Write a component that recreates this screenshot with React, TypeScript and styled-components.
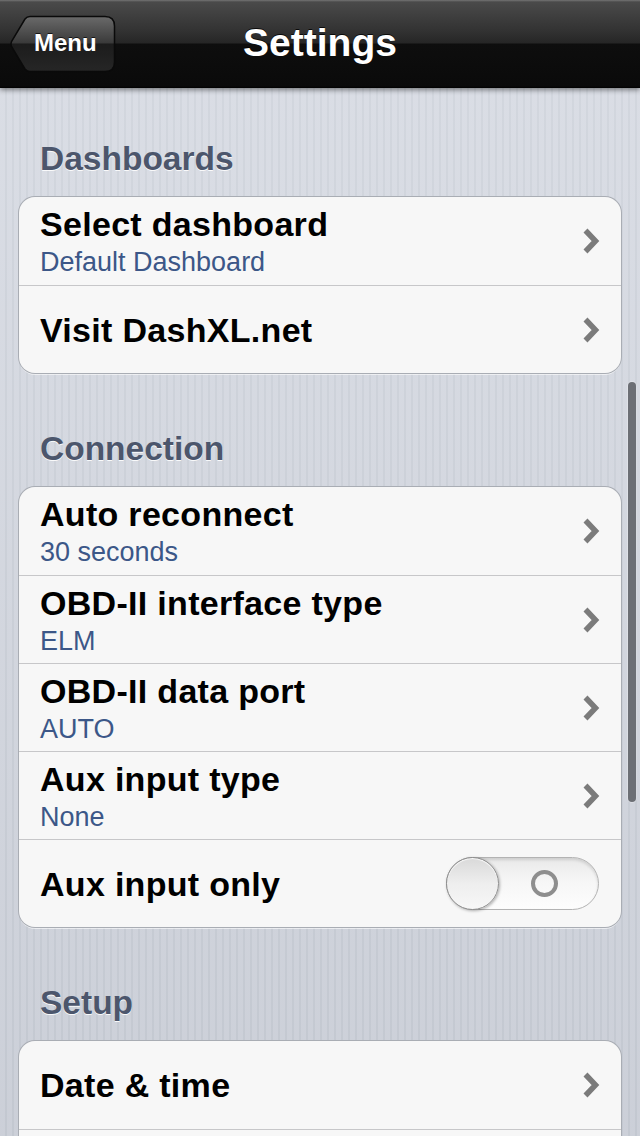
import { useState } from "react";
import styled, { createGlobalStyle } from "styled-components";

type RowKind = "link" | "switch";

interface SettingRow {
  label: string;
  value?: string;
  kind: RowKind;
}

interface SettingSection {
  title: string;
  rows: SettingRow[];
}

const sections: SettingSection[] = [
  {
    title: "Dashboards",
    rows: [
      { label: "Select dashboard", value: "Default Dashboard", kind: "link" },
      { label: "Visit DashXL.net", kind: "link" },
    ],
  },
  {
    title: "Connection",
    rows: [
      { label: "Auto reconnect", value: "30 seconds", kind: "link" },
      { label: "OBD-II interface type", value: "ELM", kind: "link" },
      { label: "OBD-II data port", value: "AUTO", kind: "link" },
      { label: "Aux input type", value: "None", kind: "link" },
      { label: "Aux input only", kind: "switch" },
    ],
  },
  {
    title: "Setup",
    rows: [
      { label: "Date & time", kind: "link" },
      { label: "", kind: "link" },
    ],
  },
];

function BackShape() {
  return (
    <ButtonShape width="107" height="59" viewBox="0 0 107 59">
      <defs>
        <linearGradient id="backFill" x1="0" y1="0" x2="0" y2="1">
          <stop offset="0" stopColor="#6a6a6a" />
          <stop offset="0.48" stopColor="#3a3a3a" />
          <stop offset="0.5" stopColor="#1c1c1c" />
          <stop offset="1" stopColor="#262626" />
        </linearGradient>
      </defs>
      <path
        d="M21 1.5 H96 Q105.5 1.5 105.5 11 V47 Q105.5 56.5 96 56.5 H21 Q18 56.5 16 54 L2.5 31.5 Q1.5 29 2.5 26.5 L16 4 Q18 1.5 21 1.5 Z"
        fill="url(#backFill)"
        stroke="#0a0a0a"
        strokeWidth="1.5"
      />
    </ButtonShape>
  );
}

function Chevron() {
  return (
    <ChevronIcon width="18" height="28" viewBox="0 0 18 28">
      <path d="M3.5 3.5 L13.5 14 L3.5 24.5" fill="none" stroke="#7b7b7b" strokeWidth="5.5" strokeLinejoin="miter" />
    </ChevronIcon>
  );
}

function Toggle() {
  const [on, setOn] = useState(false);
  return (
    <SwitchTrack $on={on} onClick={() => setOn(!on)}>
      <SwitchRing />
      <SwitchKnob $on={on} />
    </SwitchTrack>
  );
}

function App() {
  return (
    <>
      <GlobalStyle />
      <Screen>
        <NavBar>
          <NavSide>
            <BackButton>
              <BackShape />
              <BackLabel>Menu</BackLabel>
            </BackButton>
          </NavSide>
          <NavTitle>Settings</NavTitle>
          <NavSide />
        </NavBar>

        <Content>
          {sections.map((section) => (
            <Section key={section.title}>
              <SectionTitle>{section.title}</SectionTitle>
              <Card>
                {section.rows.map((row, index) => (
                  <Row key={index}>
                    <RowText>
                      <RowLabel>{row.label}</RowLabel>
                      {row.value && <RowValue>{row.value}</RowValue>}
                    </RowText>
                    {row.kind === "switch" ? <Toggle /> : <Chevron />}
                  </Row>
                ))}
              </Card>
            </Section>
          ))}
        </Content>

        <ScrollIndicator />
      </Screen>
    </>
  );
}

const GlobalStyle = createGlobalStyle`
  html, body {
    margin: 0;
    padding: 0;
    background: #cfd3dc;
  }

  body {
    font-family: "Liberation Sans", Arial, sans-serif;
    -webkit-font-smoothing: antialiased;
  }
`;

const Screen = styled.div`
  position: relative;
  width: 640px;
  height: 1136px;
  overflow: hidden;
  background:
    linear-gradient(180deg, rgba(255, 255, 255, 0.16) 0%, rgba(0, 0, 0, 0.04) 100%),
    repeating-linear-gradient(90deg, #d4d8e1 0 5px, #cbd0d9 5px 7px);
`;

const NavBar = styled.header`
  position: relative;
  z-index: 2;
  height: 88px;
  display: grid;
  grid-template-columns: 1fr auto 1fr;
  align-items: center;
  background: linear-gradient(
    180deg,
    #747474 0,
    #4a4a4a 2px,
    #333333 30px,
    #262626 43px,
    #0e0e0e 44px,
    #0a0a0a 86px,
    #000 88px
  );
  box-shadow: 0 2px 5px rgba(0, 0, 0, 0.45);
`;

const NavSide = styled.div`
  display: flex;
  align-items: center;
`;

const BackButton = styled.button`
  position: relative;
  width: 107px;
  height: 59px;
  margin-left: 9px;
  padding: 0 0 0 25px;
  border: 0;
  background: none;
  display: flex;
  align-items: center;
  cursor: pointer;
`;

const ButtonShape = styled.svg`
  position: absolute;
  left: 0;
  top: 0;
`;

const BackLabel = styled.span`
  position: relative;
  font-family: "Liberation Sans", Arial, sans-serif;
  font-size: 24px;
  font-weight: bold;
  color: #fff;
  text-shadow: 0 -1px 0 rgba(0, 0, 0, 0.7);
  margin-top: -2px;
`;

const NavTitle = styled.h1`
  margin: 0;
  font-size: 39px;
  font-weight: bold;
  color: #fff;
  text-shadow: 0 -1px 0 rgba(0, 0, 0, 0.8);
  margin-top: -2px;
`;

const Content = styled.main`
  padding: 51px 19px 0;
  display: flex;
  flex-direction: column;
  gap: 56px;
`;

const Section = styled.section`
  display: flex;
  flex-direction: column;
`;

const SectionTitle = styled.h2`
  margin: 0 0 18px;
  padding-left: 21px;
  font-size: 33.5px;
  line-height: 40px;
  font-weight: bold;
  color: #4c566c;
  text-shadow: 0 1px 0 rgba(255, 255, 255, 0.9);
`;

const Card = styled.div`
  background: #f7f7f7;
  border-radius: 16px;
  box-shadow:
    0 0 0 1px #a9adb4,
    0 2px 0 0 rgba(255, 255, 255, 0.6);
  overflow: hidden;
`;

const Row = styled.div`
  box-sizing: border-box;
  height: 88px;
  padding: 0 22px 0 21px;
  display: flex;
  align-items: center;
  justify-content: space-between;

  & + & {
    border-top: 1px solid #c7c7c9;
  }
`;

const RowText = styled.div`
  display: flex;
  flex-direction: column;
  gap: 3px;
`;

const RowLabel = styled.span`
  font-size: 34px;
  line-height: 40px;
  letter-spacing: 0.3px;
  font-weight: bold;
  color: #000;
`;

const RowValue = styled.span`
  font-size: 27px;
  line-height: 31px;
  color: #3c5788;
`;

const ChevronIcon = styled.svg`
  flex: none;
  margin-right: -1px;
`;

const SwitchTrack = styled.div<{ $on: boolean }>`
  position: relative;
  box-sizing: border-box;
  width: 153px;
  height: 53px;
  border-radius: 27px;
  border: 1px solid #b3b3b3;
  background: ${(p) =>
    p.$on
      ? "linear-gradient(180deg, #2f6ce0 0%, #5b97f3 100%)"
      : "linear-gradient(180deg, #e9e9e9 0%, #f6f6f6 45%, #fdfdfd 100%)"};
  box-shadow: inset 0 2px 3px rgba(0, 0, 0, 0.12);
  cursor: pointer;
`;

const SwitchRing = styled.span`
  position: absolute;
  left: 84px;
  top: 12px;
  box-sizing: border-box;
  width: 27px;
  height: 27px;
  border-radius: 50%;
  border: 4px solid #8e8e8e;
`;

const SwitchKnob = styled.span<{ $on: boolean }>`
  position: absolute;
  top: -1px;
  left: ${(p) => (p.$on ? "99px" : "-1px")};
  box-sizing: border-box;
  width: 53px;
  height: 53px;
  border-radius: 50%;
  border: 1px solid #8d8d8d;
  background: linear-gradient(180deg, #d9d9d9 0%, #eeeeee 50%, #f7f7f7 100%);
  box-shadow:
    inset 0 1px 1px rgba(255, 255, 255, 0.9),
    1px 1px 3px rgba(0, 0, 0, 0.3);
  transition: left 0.2s ease-in-out;
`;

const ScrollIndicator = styled.div`
  position: absolute;
  top: 382px;
  right: 4px;
  width: 8px;
  height: 420px;
  border-radius: 4px;
  background: #6c6f75;
  box-shadow: 0 0 0 1px rgba(255, 255, 255, 0.25);
`;

export default App;
